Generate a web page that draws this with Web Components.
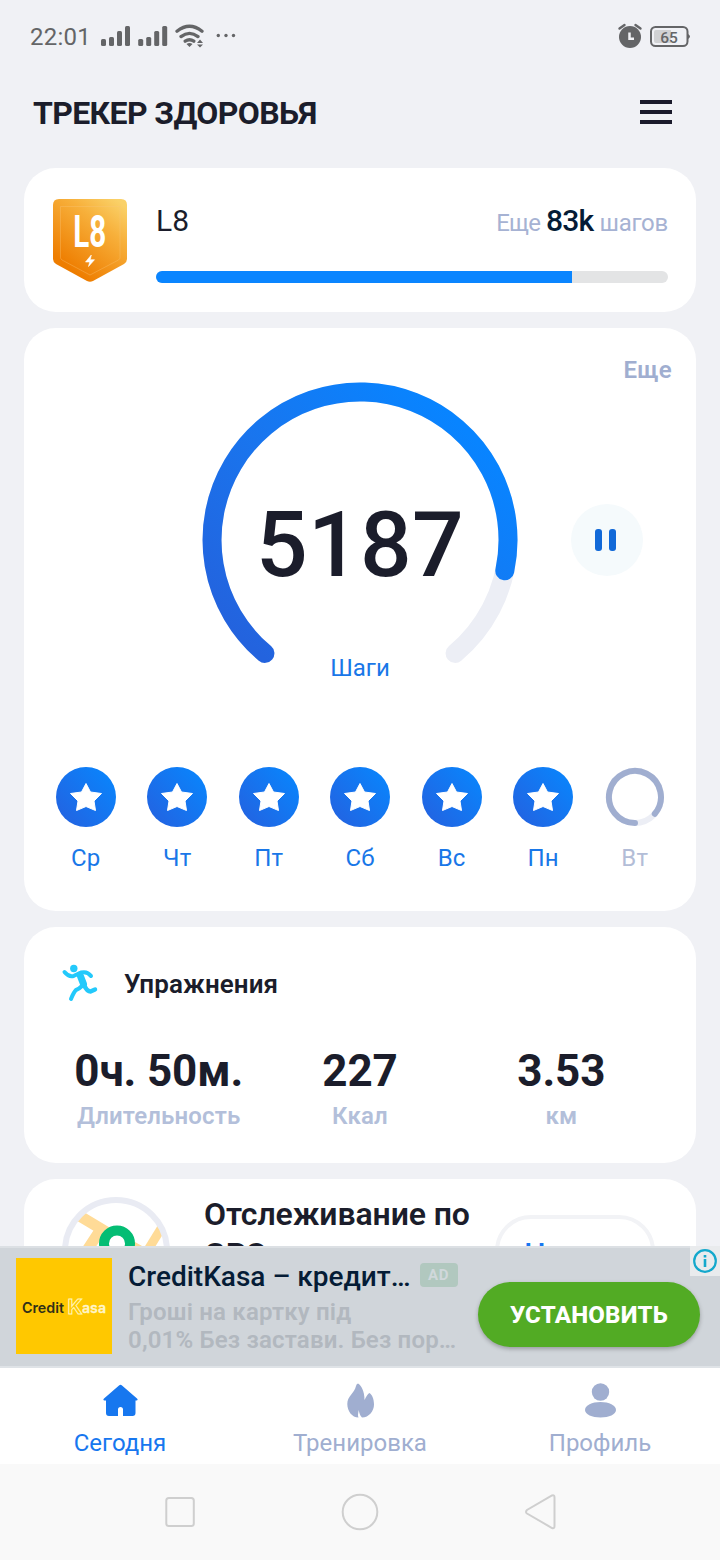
<!DOCTYPE html>
<html lang="ru">
<head>
<meta charset="utf-8">
<title>Трекер здоровья</title>
<style>
body { margin: 0; font-family: Roboto, "Liberation Sans", sans-serif; background: #f0f1f5; }
</style>
</head>
<body>
<health-app></health-app>
<script>
const define = (name, css, html) => customElements.define(name, class extends HTMLElement {
  constructor() {
    super();
    const attrs = n => this.getAttribute(n) || '';
    this.attachShadow({ mode: 'open' }).innerHTML =
      `<style>*{box-sizing:border-box}:host{display:block;box-sizing:border-box}svg{display:block}${css}</style>` +
      (typeof html === 'function' ? html(attrs) : html);
  }
});

define('status-bar', `
:host{display:flex;align-items:center;height:72px;padding:0 30px 0 30px;color:#646567}
.time{font-size:24px;line-height:30px;letter-spacing:.25px;width:71px;white-space:nowrap;padding-top:1px}
.end{margin-left:auto;display:flex;gap:8px}`, `
<span class="time">22:01</span>
<svg width="150" height="30" viewBox="101 21 150 30" fill="#646567">
<g id="s"><rect x="101" y="39" width="5" height="7" rx="1.5"/><rect x="109" y="37" width="5" height="9" rx="1.5"/><rect x="117" y="31" width="5" height="15" rx="1.5"/><rect x="125" y="26" width="5" height="20" rx="1.5"/></g>
<use href="#s" x="37.2"/>
<g fill="none" stroke="#646567" stroke-width="3.300" stroke-linecap="round"><path d="M177 31.300q12.500-10 25 0M181 36.600q8.500-6.500 17 0M185.200 41.200q4.300-3 8.600 0"/></g>
<path d="M186.500 44q3-1.800 6 0l-3 3zM197 43l3-3.600 3 3.600zM197 44.500h6l-3 3z"/>
<circle cx="218.300" cy="35.500" r="1.700"/><circle cx="226" cy="35.500" r="1.700"/><circle cx="233.500" cy="35.500" r="1.700"/></svg>
<svg class="end" width="74" height="30" viewBox="616 20 74 30">
<g stroke="#646567" fill="none" stroke-linecap="round" stroke-width="2.400"><path d="M619.500 27.500l5-3.500M640.500 27.500l-5-3.500"/></g>
<circle cx="630" cy="36" r="11" fill="#646567"/><path d="M629.500 31.500v6.200h4.500" fill="none" stroke="#f0f1f5" stroke-width="2.500"/>
<rect x="651" y="26" width="36.500" height="19" rx="4.500" fill="none" stroke="#646567" stroke-width="2"/><path d="M688 33q4 2.500 0 5z" fill="#646567"/>
<path d="M656 29h15v13h-15q-2 0-2-2v-9q0-2 2-2z" fill="#d0d1d3"/>
<text x="669" y="41.500" text-anchor="middle" font-size="15.500" font-weight="500" fill="#646567">65</text></svg>`);

define('app-header', `
:host{display:flex;align-items:center;justify-content:space-between;height:96px;padding:0 48px 16px 33px}
h1{margin:0;padding-top:2px;font-size:32px;line-height:38px;font-weight:700;color:#1b1d2b;letter-spacing:-.63px;white-space:nowrap}
.m{width:32px;height:24px;display:flex;flex-direction:column;justify-content:space-between}
.m i{height:4px;background:#1b1b2b}`, `<h1>ТРЕКЕР ЗДОРОВЬЯ</h1><div class="m"><i></i><i></i><i></i></div>`);

define('app-card', `:host{background:#fff;border-radius:32px;flex:none}`, `<slot></slot>`);

define('level-badge', `:host{width:76px;height:86px}text{font-family:Roboto,sans-serif}`, `
<svg width="76" height="86" viewBox="52 198 76 86"><defs><linearGradient id="g" x1=".85" y1="0" x2=".25" y2=".85"><stop offset="0" stop-color="#fad168"/><stop offset=".35" stop-color="#f7b03b"/><stop offset="1" stop-color="#ee7d00"/></linearGradient></defs>
<path d="M59 199H121Q127 199 127 205V259Q127 262 124 264L93 281Q90 282.500 87 281L56 264Q53 262 53 259V205Q53 199 59 199z" fill="url(#g)"/>
<path d="M60.500 206.500H120V257.500Q120 259 118.500 260L90 275 62 260Q60.500 259 60.500 257.500z" fill="none" stroke="#f9c777" stroke-opacity=".35"/>
<text x="89.800" y="247.200" text-anchor="middle" font-size="45" font-weight="700" fill="#fff" textLength="33" lengthAdjust="spacingAndGlyphs">L8</text>
<path d="M91.300 255L85.500 262h4.200l-1.200 4.500 6-6.800h-4.200z" fill="#fff" stroke="#fff" stroke-width=".6" stroke-linejoin="round"/></svg>`);

define('level-progress', `
:host{display:flex;height:144px;padding:30px 28px;gap:28px}
.c{flex:1;min-width:0}.t{display:flex;justify-content:space-between;align-items:baseline;height:46px;line-height:46px}
.l{font-size:30px;color:#1b1d2b}.r{font-size:24px;color:#a6b2d3;white-space:nowrap}
.r span{letter-spacing:-.25px}.r .e{letter-spacing:-.9px}b{font-size:30px;font-weight:500;color:#051c36;letter-spacing:-.7px}
.b{height:12px;margin-top:27px;border-radius:6px;background:#e3e4e5;overflow:hidden}.b i{display:block;width:416px;height:12px;background:#0a85ff}`, `
<level-badge></level-badge><div class="c"><div class="t"><span class="l">L8</span><span class="r"><span class="e">Еще</span> <b>83k</b> <span>шагов</span></span></div><div class="b"><i></i></div></div>`);

define('step-gauge', `
:host{display:grid;grid-template-columns:1fr 320px 1fr;height:345px}
.dial{grid-column:2;display:grid;justify-items:center}
.dial>*{grid-area:1/1}
.n{font-size:91px;line-height:100px;font-weight:500;color:#1b1d2b;margin-top:115px;height:100px;letter-spacing:.3px}
.u{font-size:24px;line-height:28px;color:#1977e8;margin-top:274px;height:28px}
.p{width:72px;height:72px;border-radius:50%;background:#f5fafc;margin:124px 0 0 51px;padding-right:3px;display:flex;align-items:center;justify-content:center;gap:7px}
.p i{width:7px;height:22px;border-radius:3px;background:#1269d8}`, `
<div class="dial"><svg width="320" height="320" viewBox="200 380 320 320"><defs><linearGradient id="g" gradientUnits="userSpaceOnUse" x1="255" y1="650" x2="465" y2="430"><stop offset="0" stop-color="#2363de"/><stop offset=".5" stop-color="#1975ee"/><stop offset="1" stop-color="#0884ff"/></linearGradient></defs>
<g fill="none" stroke-width="19" stroke-linecap="round"><path d="M264.900 653.400A148 148 0 1 1 455.100 653.400" stroke="#eceef5"/><path d="M264.900 653.400A148 148 0 1 1 504.800 570.800" stroke="url(#g)"/></g></svg>
<div class="n">5187</div><div class="u">Шаги</div></div><div class="p"><i></i><i></i></div>`);

define('day-item', `
:host{width:60px;display:flex;flex-direction:column;align-items:center;color:#1977e8}
:host([today]){color:#b3bdd7}
span{font-size:24px;line-height:28px;margin-top:17px;letter-spacing:.2px}`, a => `
<svg width="60" height="60" viewBox="-30 -30 60 60">${a('kind') === 'ring' ?
`<circle r="26" fill="none" stroke="#eceef5" stroke-width="6"/><path d="M0 26A26 26 0 1 1 19.800 16.800" fill="none" stroke="#a0aed0" stroke-width="6" stroke-linecap="round"/>` :
`<defs><linearGradient id="g" x1=".1" y1=".9" x2=".9" y2=".2"><stop offset="0" stop-color="#2264e2"/><stop offset="1" stop-color="#0b82fa"/></linearGradient></defs><circle r="30" fill="url(#g)"/>
<path d="M0-13.500L4.500-5 15.500-3.500 8 4 9.500 13.500 0 9.500-9.500 13.500-8 4-15.500-3.500-4.500-5z" fill="#fff" stroke="#fff" stroke-width="1" stroke-linejoin="round"/>`}</svg><span><slot></slot></span>`);

define('steps-panel', `
:host{height:583px;padding-top:28px}
.more{text-align:right;padding-right:24px;font-size:24px;line-height:28px;font-weight:600;color:#a0aed0;height:24px;letter-spacing:.3px}
.days{display:flex;justify-content:space-between;padding:0 31.300px 0 31.700px;margin-top:42px}`, `
<div class="more">Еще</div><step-gauge></step-gauge>
<div class="days"><day-item>Ср</day-item><day-item>Чт</day-item><day-item>Пт</day-item><day-item>Сб</day-item><day-item>Вс</day-item><day-item>Пн</day-item><day-item kind="ring" today>Вт</day-item></div>`);

define('stat-item', `
:host{text-align:center;white-space:nowrap}
.v{font-size:44px;line-height:52px;font-weight:700;color:#1b1d2b;letter-spacing:-.15px}
.k{font-size:24px;line-height:28px;font-weight:600;color:#b3bfda;margin-top:5px;letter-spacing:.15px}`,
a => `<div class="v">${a('value')}</div><div class="k"><slot></slot></div>`);

define('exercise-panel', `
:host{height:236px;padding:36px 34px 0}
.h{display:flex;align-items:center;gap:24px;height:40px}
.h span{font-size:26px;line-height:40px;font-weight:600;color:#1b1d2b;padding-top:1px;letter-spacing:.1px}
.s{display:grid;grid-template-columns:repeat(3,1fr);margin-top:42px}`, `
<div class="h"><svg width="42" height="40" viewBox="58 963 42 40"><circle cx="73.800" cy="968.500" r="3.700" fill="#23c9fb"/>
<g fill="none" stroke="#23c9fb" stroke-linecap="round" stroke-linejoin="round"><path d="M64.500 972Q69 977.500 74 975.800L81 972.500Q87.500 971 91 976" stroke-width="4"/><path d="M80 975L83.500 984" stroke-width="7"/><path d="M82 986Q79 989 76 990 73.500 992.500 71 999" stroke-width="4"/><path d="M84 985Q87 991.500 90.500 991.500L95 989.500" stroke-width="4.500"/></g></svg><span>Упражнения</span></div>
<div class="s"><stat-item value="0ч. 50м.">Длительность</stat-item><stat-item value="227">Ккал</stat-item><stat-item value="3.53">км</stat-item></div>`);

define('gps-panel', `
:host{display:flex;height:144px;padding:18px 40px 0 38px}
.t{margin:-3px 0 0 34px;width:291px;font-size:32px;line-height:40px;font-weight:600;color:#1b1d2b;letter-spacing:-.1px}
.b{margin-top:18px;width:160px;height:72px;border:4px solid #f2f3f6;border-radius:40px;text-align:center;font-size:30px;line-height:70px;color:#1977f0;font-weight:500}`, `
<svg width="108" height="108" viewBox="62 1197 108 108"><defs><clipPath id="c"><circle cx="116" cy="1251" r="49"/></clipPath></defs>
<g clip-path="url(#c)" fill="none" stroke="#ffdb97" stroke-width="11"><path d="M78 1215L108 1233 145 1254M101 1229L82 1258" /><path d="M162 1227L143 1258" stroke-width="9"/></g>
<circle cx="116" cy="1251" r="51" fill="none" stroke="#e9ebf3" stroke-width="6"/><circle cx="117" cy="1243.500" r="13" fill="#fff" stroke="#04bd74" stroke-width="10"/></svg>
<div class="t">Отслеживание по GPS</div><div class="b">Начать</div>`);

define('ad-banner', `
:host{display:flex;position:relative;height:122px;background:#d0d5da;border-top:2px solid #dce0e4;border-bottom:2px solid #dfe3e7;padding:10px 20px 0 16px;flex:none}
.logo{width:96px;height:96px;background:#ffc800;flex:none}
.x{margin-left:16px;width:350px}
.h{display:flex;align-items:center;height:34px;margin-top:1px;font-size:28px;font-weight:500;color:#051c36;white-space:nowrap}
.a{margin:-3px 0 0 9px;width:38px;height:24px;border-radius:4px;background:#b1c8bf;color:#d0d8db;font-size:15px;line-height:25px;font-weight:700;text-align:center;letter-spacing:.5px}
.d{font-size:24px;line-height:28px;font-weight:600;color:#b2b8bf;margin-top:5px;white-space:nowrap;letter-spacing:.18px}
.g{width:222px;height:65px;margin-top:24px;border-radius:33px;background:#52ab24;box-shadow:0 2px 4px #0004;color:#fff;font-size:24px;line-height:67px;font-weight:800;text-align:center;letter-spacing:.25px}
.i{position:absolute;right:0;top:-2px;background:#e9ebed}`, `
<svg class="logo" viewBox="0 0 96 96"><g font-family="Inter, sans-serif" font-weight="600" font-size="14.500"><text x="6" y="55" fill="#303018" textLength="42" lengthAdjust="spacingAndGlyphs">Credit</text><text x="66" y="55" fill="#fff5c8" stroke="#fff5c8" stroke-width=".3" textLength="24" lengthAdjust="spacingAndGlyphs">asa</text><text x="51.500" y="55.500" font-size="20" font-weight="700" fill="#ffc800" stroke="#fff5b8" stroke-width="1" textLength="15" lengthAdjust="spacingAndGlyphs">K</text></g></svg>
<div class="x"><div class="h"><span class="n">CreditKasa – кредит…</span><span class="a">AD</span></div><div class="d">Гроші на картку під<br>0,01% Без застави. Без пор…</div></div>
<div class="g">УСТАНОВИТЬ</div>
<svg class="i" width="30" height="30" viewBox="0 0 30 30" fill="none" stroke="#14a8cc"><circle cx="15" cy="15" r="10.800" stroke-width="2.200"/><path d="M15 13v8M15 9v2.500" stroke-width="2.600"/></svg>`);

define('nav-item', `
:host{flex:1;display:flex;flex-direction:column;align-items:center;color:#a0aed0;padding-top:12px}
:host([active]){color:#1777ef}
span{font-size:24px;line-height:28px;margin-top:7px}`, a => `
<svg width="42" height="42" viewBox="0 0 42 42" fill="currentColor">${{
home: '<path d="M20 5.500Q21.500 4 23 5.500L38 18.500Q39.500 20 37.500 20.500H36.500V33Q36.500 36 33.500 36H24V29.500Q24 27 21.500 27T19 29.500V36H10Q7 36 7 33V20.500H5.500Q3.500 20 5 18.500z"/>',
fire: '<path d="M19 3.500C22 5 25.500 11 25.500 20 27.500 16 29 13.500 30.500 13 33 14.500 35 19 35 24.500 35 31 30 37.500 23 37.500 21 36 20.300 33 19.700 30 19.300 33 18.500 35.500 19.500 37.500 13 37.500 8.300 31 8.300 24 8.300 16 15.500 13 17 6Q17.500 3.500 19 3.500z"/>',
user: '<circle cx="21.500" cy="12" r="8.700"/><path d="M21.500 22C30 22 37 25.500 37 30S30 37.500 21.500 37.500 6 34.500 6 30 13 22 21.500 22z"/>'
}[a('icon')]}</svg><span><slot></slot></span>`);

define('tab-bar', `:host{display:flex;height:96px;background:#fff;flex:none}`, `
<nav-item icon="home" active>Сегодня</nav-item><nav-item icon="fire">Тренировка</nav-item><nav-item icon="user">Профиль</nav-item>`);

define('system-bar', `:host{display:flex;height:96px;padding:0 90px;background:#f9f9f9;flex:none}div{flex:1;display:grid;place-items:center}`, `
<div><svg width="40" height="40" fill="none" stroke="#cfcfcf" stroke-width="2"><rect x="6.300" y="6" width="27.500" height="28" rx="2.500"/></svg></div>
<div><svg width="40" height="40" fill="none" stroke="#cfcfcf" stroke-width="2"><circle cx="20" cy="20" r="17.300"/></svg></div>
<div><svg width="40" height="40" fill="none" stroke="#cfcfcf" stroke-width="2"><path d="M32 3.500Q34.500 2.500 34.500 5.500V34Q34.500 37 32 36L7 21.500Q5 20 7 18z"/></svg></div>`);

define('health-app', `
:host{display:flex;flex-direction:column;width:720px;height:1560px;background:#f0f1f5;overflow:hidden}
main{flex:none;height:1078px;padding:0 24px;overflow:hidden;display:flex;flex-direction:column;gap:16px}`, `
<status-bar></status-bar><app-header></app-header>
<main><app-card><level-progress></level-progress></app-card><app-card><steps-panel></steps-panel></app-card><app-card><exercise-panel></exercise-panel></app-card><app-card><gps-panel></gps-panel></app-card></main>
<ad-banner></ad-banner><tab-bar></tab-bar><system-bar></system-bar>`);
</script>
</body>
</html>
